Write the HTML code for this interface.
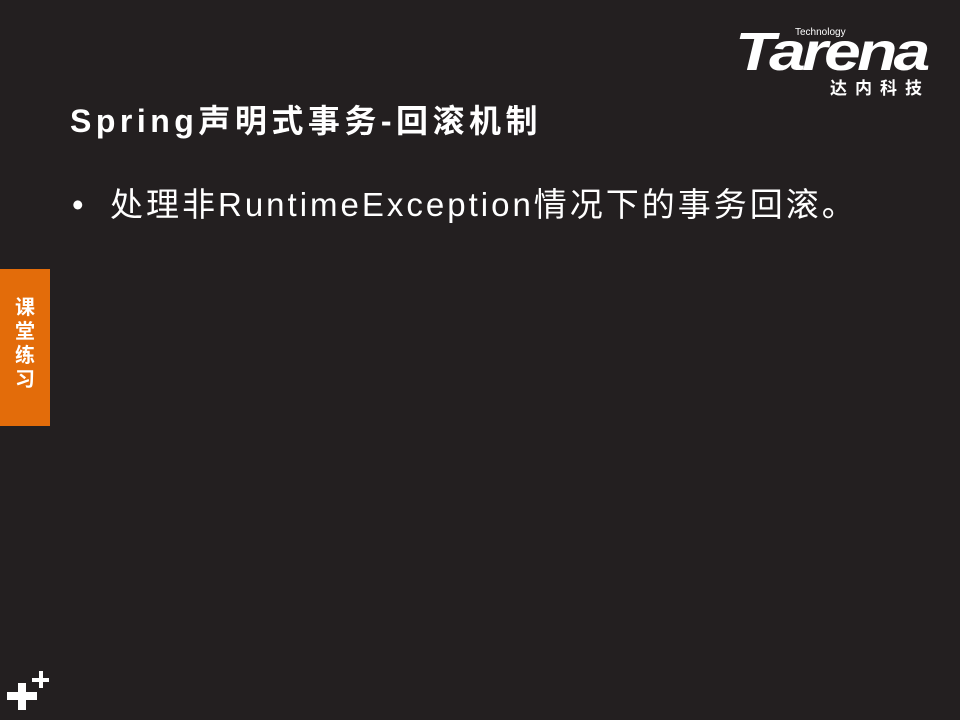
<!DOCTYPE html>
<html><head><meta charset="utf-8"><style>
html,body{margin:0;padding:0}
body{width:960px;height:720px;background:#231f20;position:relative;overflow:hidden;font-family:"Liberation Sans","Noto Sans CJK SC",sans-serif;color:#fff}
.t{position:absolute;left:70px;top:96px;font-size:32px;font-weight:bold;white-space:nowrap;letter-spacing:4.5px}
.b{position:absolute;left:72px;top:178px;font-size:33px;white-space:nowrap;letter-spacing:3px}
.b span{display:inline-block;width:38px}
.tab{position:absolute;left:0;top:269px;width:50px;height:157px;background:#e36c0a}
.tab div{position:absolute;left:12px;top:27px;width:26px;font-size:20px;font-weight:bold;line-height:24px;text-align:center}
.logo{position:absolute;left:735px;top:24px}
.p{position:absolute;background:#fff}
</style></head><body>
<div class="logo">
<div style="position:absolute;left:60px;top:3px;font-size:10px;">Technology</div>
<div style="position:absolute;left:0;top:2px;font-size:54px;font-weight:bold;font-style:italic;letter-spacing:-3px;line-height:52px;transform:scaleX(1.22);transform-origin:left">Tarena</div>
<div style="position:absolute;left:95px;top:50px;font-size:17px;font-weight:bold;letter-spacing:8px;white-space:nowrap">达内科技</div>
</div>
<div class="t">Spring声明式事务-回滚机制</div>
<div class="b"><span>•</span>处理非RuntimeException情况下的事务回滚。</div>
<div class="tab"><div>课<br>堂<br>练<br>习</div></div>
<div class="p" style="left:7px;top:692px;width:30px;height:8px"></div>
<div class="p" style="left:18px;top:683px;width:8px;height:27px"></div>
<div class="p" style="left:32px;top:678px;width:17px;height:4px"></div>
<div class="p" style="left:39px;top:671px;width:4px;height:17px"></div>
</body></html>
